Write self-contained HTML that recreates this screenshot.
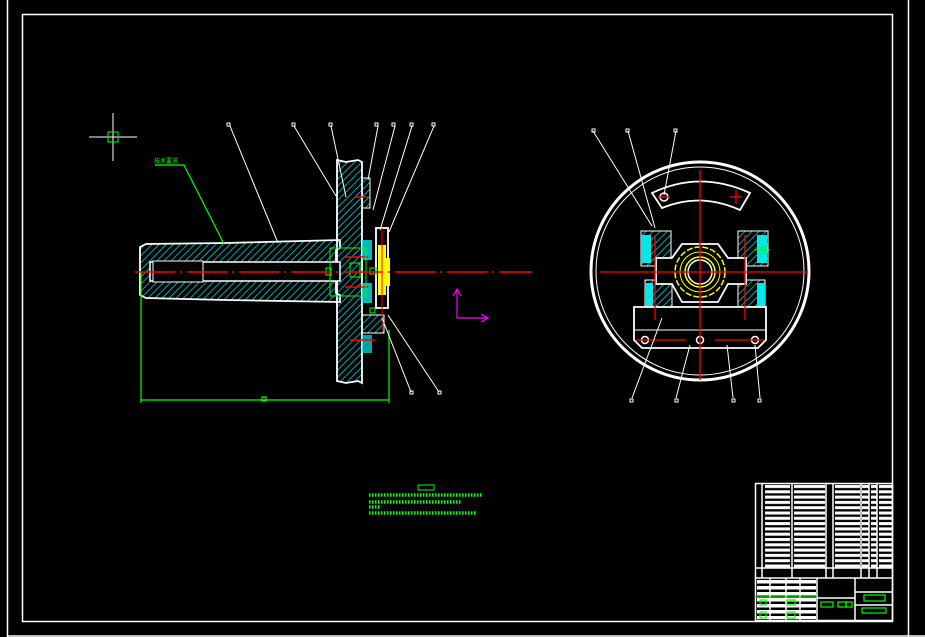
<!DOCTYPE html>
<html><head><meta charset="utf-8"><style>
html,body{margin:0;padding:0;background:#000;width:925px;height:637px;overflow:hidden}
svg{display:block}
</style></head><body>
<svg width="925" height="637" viewBox="0 0 925 637" xmlns="http://www.w3.org/2000/svg">
<defs>
<pattern id="h" width="5" height="5" patternUnits="userSpaceOnUse" patternTransform="rotate(45)">
<line x1="0" y1="0" x2="0" y2="5" stroke="#00e8e8" stroke-width="1.4"/>
</pattern>
<pattern id="rows" x="0" y="484" width="10" height="5.3" patternUnits="userSpaceOnUse">
<rect x="0" y="1" width="10" height="3" fill="#fff"/>
</pattern>
<pattern id="rows2" x="0" y="579" width="10" height="6" patternUnits="userSpaceOnUse">
<rect x="0" y="1" width="10" height="3.5" fill="#fff"/>
</pattern>
</defs>
<rect width="925" height="637" fill="#000"/>
<line x1="7.5" y1="0" x2="7.5" y2="637" stroke="#fff" stroke-width="1.5"/>
<line x1="908.5" y1="0" x2="908.5" y2="637" stroke="#fff" stroke-width="1.5"/>
<line x1="7" y1="636" x2="925" y2="636" stroke="#fff" stroke-width="1.5"/>
<rect x="22.5" y="14.5" width="870" height="607" fill="none" stroke="#fff" stroke-width="1.5"/>

<g stroke="#fff" stroke-width="1"><line x1="89" y1="137" x2="137" y2="137"/><line x1="113" y1="113" x2="113" y2="161"/></g>
<rect x="108" y="132" width="10" height="10" fill="none" stroke="#0f0"/>

<g fill="none" stroke="#fff" stroke-width="1.8">
<path d="M140 247 L146 244 L225 243 L340 240 L340 248 L336 250 L336 293 L340 295 L340 302 L225 300 L146 298 L140 295 Z" fill="url(#h)"/>
<path d="M337 160 L346 162 L358 160 L362 162 L362 383 L358 381 L346 383 L337 381 Z" fill="url(#h)"/>
</g>
<rect x="150" y="262" width="190" height="19" fill="#000" stroke="#fff" stroke-width="1.5"/>
<rect x="153" y="261" width="50" height="21" fill="#000" stroke="#fff" stroke-width="1"/>
<rect x="362" y="178" width="8" height="30" fill="url(#h)" stroke="#fff"/>
<rect x="362" y="240" width="10" height="20" fill="#00e8e8" opacity=".8"/>
<rect x="362" y="283" width="10" height="20" fill="#00e8e8" opacity=".8"/>
<rect x="362" y="315" width="22" height="18" fill="url(#h)" stroke="#fff"/>
<rect x="362" y="335" width="10" height="18" fill="#00e8e8" opacity=".7"/>
<rect x="376" y="228" width="12" height="80" fill="#000" stroke="#fff" stroke-width="1.8"/>
<rect x="378" y="245" width="8" height="50" fill="#ff0"/>
<rect x="386" y="258" width="4" height="28" fill="#ff0"/>
<line x1="382" y1="228" x2="382" y2="330" stroke="#f00"/>
<g stroke="#f00" stroke-width="1.5"><line x1="355" y1="197" x2="368" y2="197"/><line x1="350" y1="340" x2="375" y2="340"/><line x1="345" y1="257" x2="368" y2="257"/><line x1="345" y1="287" x2="368" y2="287"/></g>
<g fill="none" stroke="#0f0" stroke-width="1"><rect x="330" y="248" width="36" height="48"/><rect x="350" y="263" width="10" height="14"/><rect x="370" y="268" width="6" height="6"/><rect x="370" y="308" width="5" height="5"/><rect x="326" y="268" width="5" height="7"/></g>
<line x1="135" y1="272" x2="532" y2="272" stroke="#f00" stroke-width="1.5" stroke-dasharray="40 5 2 5"/>
<g stroke="#0f0" stroke-width="1.2" fill="none"><line x1="141" y1="272" x2="141" y2="403"/><line x1="389" y1="330" x2="389" y2="403"/><line x1="141" y1="400" x2="389" y2="400"/><rect x="262" y="397" width="4" height="4"/>
<polyline points="155,165 184,165 224,244"/></g>
<text x="154" y="163" font-family="Liberation Sans, Noto Sans CJK SC, sans-serif" font-size="6" fill="#0f0">技术要求</text>
<g stroke="#fff" stroke-width="1" fill="none">
<line x1="230" y1="126" x2="278" y2="243"/><line x1="294" y1="126" x2="336" y2="196"/><line x1="331" y1="126" x2="346" y2="197"/>
<line x1="378" y1="126" x2="368" y2="180"/><line x1="395" y1="126" x2="373" y2="210"/><line x1="412" y1="126" x2="380" y2="230"/><line x1="434" y1="126" x2="389" y2="232"/>
<line x1="382" y1="318" x2="411" y2="392"/><line x1="388" y1="315" x2="439" y2="392"/>
</g>
<g fill="none" stroke="#fff" stroke-width="1"><rect x="227" y="123" width="3" height="3"/><rect x="292" y="123" width="3" height="3"/><rect x="329" y="123" width="3" height="3"/><rect x="375" y="123" width="3" height="3"/><rect x="392" y="123" width="3" height="3"/><rect x="410" y="123" width="3" height="3"/><rect x="432" y="123" width="3" height="3"/><rect x="410" y="391" width="3" height="3"/><rect x="438" y="391" width="3" height="3"/></g>
<g stroke="#f0f" stroke-width="1.2" fill="none"><line x1="457" y1="318" x2="457" y2="290"/><polyline points="453,296 457,289 461,296"/><line x1="457" y1="318" x2="487" y2="318"/><polyline points="481,314 488,318 481,322"/></g>

<circle cx="700" cy="271" r="109" fill="none" stroke="#fff" stroke-width="3"/>
<circle cx="700" cy="271" r="104" fill="none" stroke="#fff" stroke-width="1"/>
<path d="M652 193 Q700 170 750 193 L740 210 Q700 192 662 208 Z" fill="none" stroke="#fff" stroke-width="1.8"/>
<rect x="641" y="231" width="30" height="35" fill="url(#h)" stroke="#fff"/>
<rect x="738" y="231" width="30" height="35" fill="url(#h)" stroke="#fff"/>
<rect x="645" y="280" width="27" height="37" fill="url(#h)" stroke="#fff"/>
<rect x="738" y="280" width="27" height="37" fill="url(#h)" stroke="#fff"/>
<rect x="641" y="235" width="10" height="28" fill="#00e8e8"/><rect x="757" y="235" width="10" height="28" fill="#00e8e8"/>
<rect x="645" y="283" width="8" height="32" fill="#00e8e8"/><rect x="757" y="283" width="8" height="32" fill="#00e8e8"/>
<path d="M682 244 L718 244 L728 258 L746 258 L746 284 L728 284 L718 302 L682 302 L672 284 L656 284 L656 258 L672 258 Z" fill="#000" stroke="#fff" stroke-width="1.8"/>
<circle cx="700" cy="272" r="25" fill="none" stroke="#ff0" stroke-width="1.5" stroke-dasharray="6 2"/>
<circle cx="700" cy="272" r="20" fill="none" stroke="#ff0"/>
<circle cx="700" cy="272" r="15" fill="none" stroke="#ff0" stroke-width="1.5"/>
<circle cx="700" cy="272" r="12" fill="none" stroke="#fff" stroke-width="1.5"/>
<path d="M634 307 L766 307 L766 340 L758 348 L642 348 L634 340 Z" fill="#000" stroke="#fff" stroke-width="1.8"/>
<line x1="634" y1="330" x2="766" y2="330" stroke="#fff"/>
<g stroke="#fff" stroke-width="1.5" fill="none"><circle cx="645" cy="340" r="3.5"/><circle cx="700" cy="340" r="3.5"/><circle cx="755" cy="340" r="3.5"/><circle cx="664" cy="197" r="4"/></g>
<g stroke="#f00" stroke-width="1.3">
<line x1="700" y1="170" x2="700" y2="380"/><line x1="600" y1="272" x2="808" y2="272"/>
<line x1="636" y1="340" x2="686" y2="340"/><line x1="715" y1="340" x2="764" y2="340"/>
<line x1="658" y1="197" x2="670" y2="197"/><line x1="730" y1="197" x2="742" y2="197"/><line x1="736" y1="190" x2="736" y2="204"/>
<line x1="655" y1="235" x2="655" y2="320"/><line x1="745" y1="235" x2="745" y2="320"/>
</g>
<g stroke="#fff" stroke-width="1" fill="none">
<line x1="593" y1="131" x2="652" y2="226"/><line x1="628" y1="131" x2="655" y2="228"/><line x1="676" y1="131" x2="664" y2="195"/>
<line x1="632" y1="398" x2="662" y2="318"/><line x1="676" y1="398" x2="690" y2="345"/><line x1="733" y1="398" x2="727" y2="345"/><line x1="760" y1="398" x2="755" y2="345"/>
</g>
<g fill="none" stroke="#fff" stroke-width="1"><rect x="592" y="129" width="3" height="3"/><rect x="626" y="129" width="3" height="3"/><rect x="674" y="129" width="3" height="3"/><rect x="630" y="399" width="3" height="3"/><rect x="675" y="399" width="3" height="3"/><rect x="732" y="399" width="3" height="3"/><rect x="758" y="399" width="3" height="3"/></g>
<line x1="754" y1="250" x2="770" y2="250" stroke="#0f0"/><rect x="761" y="247" width="6" height="5" fill="none" stroke="#0f0"/>

<rect x="418" y="485" width="16" height="5" fill="none" stroke="#0f0"/>
<g stroke="#0f0" stroke-width="3.5" stroke-dasharray="1.5 1.5">
<line x1="369" y1="495" x2="482" y2="495"/><line x1="369" y1="502" x2="462" y2="502"/><line x1="369" y1="507" x2="380" y2="507"/><line x1="369" y1="513" x2="477" y2="513"/>
</g>

<!-- title block -->
<g>
<rect x="765" y="484" width="25" height="84" fill="url(#rows)"/>
<rect x="794" y="484" width="31" height="84" fill="url(#rows)"/>
<rect x="835" y="484" width="25" height="84" fill="url(#rows)"/>
<rect x="862" y="484" width="7" height="84" fill="url(#rows)"/>
<rect x="871" y="484" width="6" height="84" fill="url(#rows)"/>
<rect x="879" y="484" width="13" height="84" fill="url(#rows)"/>
<rect x="757" y="579" width="59" height="40" fill="url(#rows2)"/>
</g>
<g stroke="#fff" stroke-width="1.5" fill="none">
<rect x="755.5" y="483.5" width="137" height="137"/>
<line x1="755" y1="568" x2="893" y2="568"/><line x1="755" y1="578" x2="893" y2="578"/>
<line x1="817" y1="578" x2="817" y2="621"/><line x1="855" y1="578" x2="855" y2="621"/>
<line x1="855" y1="592" x2="893" y2="592"/><line x1="855" y1="605" x2="893" y2="605"/>
<line x1="817" y1="598" x2="855" y2="598"/>
<line x1="762" y1="483" x2="762" y2="578"/><line x1="792" y1="483" x2="792" y2="578"/><line x1="826" y1="483" x2="826" y2="578"/><line x1="833" y1="483" x2="833" y2="578"/><line x1="861" y1="483" x2="861" y2="578"/><line x1="869" y1="483" x2="869" y2="578"/><line x1="877" y1="483" x2="877" y2="578"/>
<line x1="770" y1="578" x2="770" y2="621"/><line x1="786" y1="578" x2="786" y2="621"/><line x1="800" y1="578" x2="800" y2="621"/>
</g>
<g stroke="#0f0" stroke-width="1.2" fill="none">
<rect x="864" y="595" width="21" height="6"/><rect x="862" y="608" width="24" height="5"/><rect x="821" y="602" width="12" height="5"/><rect x="838" y="602" width="8" height="5"/><rect x="846" y="602" width="6" height="5"/>
<line x1="755" y1="597" x2="817" y2="597"/><rect x="760" y="600" width="6" height="5"/><rect x="787" y="600" width="8" height="5"/><rect x="760" y="612" width="6" height="6"/><rect x="787" y="612" width="8" height="6"/>
</g>
</svg>
</body></html>
